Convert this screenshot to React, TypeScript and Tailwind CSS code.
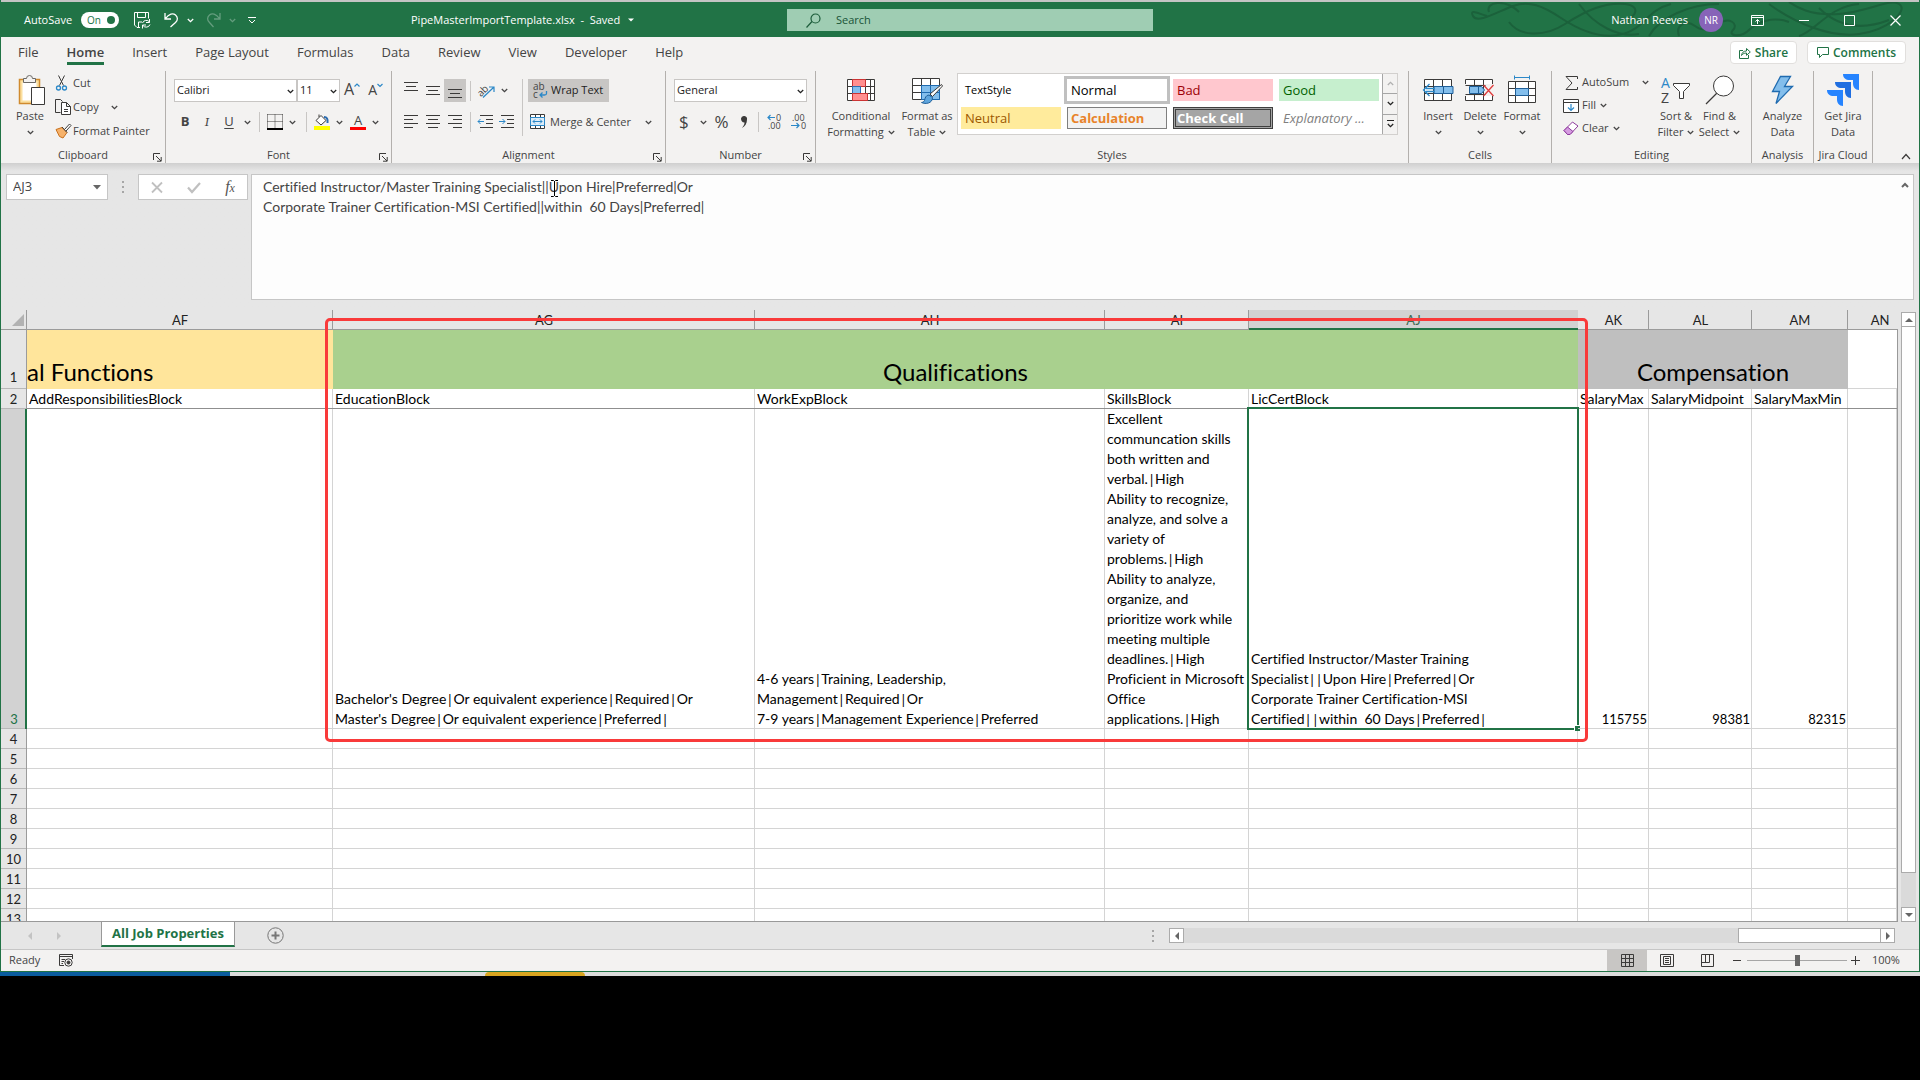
import type { ReactNode } from "react";

const TABS = ["File", "Home", "Insert", "Page Layout", "Formulas", "Data", "Review", "View", "Developer", "Help"];

const COLS = [
  { id: "AF", w: "w-[306px]", head: "AddResponsibilitiesBlock", lines: [] },
  {
    id: "AG", w: "w-[422px]", head: "EducationBlock",
    lines: ["Bachelor's Degree|Or equivalent experience|Required|Or", "Master's Degree|Or equivalent experience|Preferred|"],
  },
  {
    id: "AH", w: "w-[350px]", head: "WorkExpBlock",
    lines: ["4-6 years|Training, Leadership,", "Management|Required|Or", "7-9 years|Management Experience|Preferred"],
  },
  {
    id: "AI", w: "w-[144px]", head: "SkillsBlock",
    lines: [
      "Excellent", "communcation skills", "both written and", "verbal.|High", "Ability to recognize,", "analyze, and solve a",
      "variety of", "problems.|High", "Ability to analyze,", "organize, and", "prioritize work while", "meeting multiple",
      "deadlines.|High", "Proficient in Microsoft", "Office", "applications.|High",
    ],
  },
  {
    id: "AJ", w: "w-[329px]", head: "LicCertBlock",
    lines: [
      "Certified Instructor/Master Training", "Specialist||Upon Hire|Preferred|Or",
      "Corporate Trainer Certification-MSI", "Certified||within  60 Days|Preferred|",
    ],
  },
  { id: "AK", w: "w-[71px]", head: "SalaryMax", lines: ["115755"], num: true },
  { id: "AL", w: "w-[103px]", head: "SalaryMidpoint", lines: ["98381"], num: true },
  { id: "AM", w: "w-[96px]", head: "SalaryMaxMin", lines: ["82315"], num: true },
  { id: "AN", w: "", head: "", lines: [] },
];

const EMPTY_ROWS = [4, 5, 6, 7, 8, 9, 10, 11, 12, 13];

const FORMULA =
  "Certified Instructor/Master Training Specialist||Upon Hire|Preferred|Or\nCorporate Trainer Certification-MSI Certified||within  60 Days|Preferred|";

function Svg({ w, h, children, className = "" }: { w: number; h: number; children: ReactNode; className?: string }) {
  return (
    <svg width={w} height={h} viewBox={`0 0 ${w} ${h}`} fill="none" stroke="#3b3a39" className={`shrink-0 overflow-visible ${className}`} aria-hidden="true">
      {children}
    </svg>
  );
}

function Chev({ color = "#444", className = "" }: { color?: string; className?: string }) {
  return (
    <Svg w={7} h={5} className={className}>
      <path d="M.8 1l2.7 2.6L6.2 1" stroke={color} strokeWidth="1.3" />
    </Svg>
  );
}

function Group({ label, width, launcher, children }: { label: string; width: string; launcher?: boolean; children: ReactNode }) {
  return (
    <section className={`relative flex shrink-0 flex-col border-r border-[#b3b0ad] ${width}`} aria-label={label}>
      <div className="h-[76px]">{children}</div>
      <div className="text-center text-[11px] leading-4">{label}</div>
      {launcher && (
        <button className="absolute right-0 bottom-0 h-3 w-3" aria-label={`${label} settings`}>
          <Svg w={9} h={9}>
            <path d="M.5 7V.5H7M3 3l5 5M8.200 4v4.200H4" />
          </Svg>
        </button>
      )}
    </section>
  );
}

function Big({ icon, lines, width, chevron = "none" }: { icon: ReactNode; lines: string[]; width: string; chevron?: "none" | "inline" | "below" }) {
  return (
    <button className={`flex shrink-0 flex-col items-center ${width}`}>
      <span className="flex h-[37px] items-center justify-center">{icon}</span>
      {lines.map((l, i) => (
        <span key={l} className="flex items-center gap-1 whitespace-nowrap text-[11px] leading-4">
          {l}
          {chevron === "inline" && i === lines.length - 1 && <Chev />}
        </span>
      ))}
      {chevron === "below" && <Chev className="mt-1.5" />}
    </button>
  );
}

function Sep({ className = "h-5" }: { className?: string }) {
  return <span className={`w-px shrink-0 bg-[#c8c6c4] ${className}`} />;
}

function Combo({ label, value, width }: { label: string; value: string; width: string }) {
  return (
    <span className={`relative block h-[23px] ${width}`}>
      <select aria-label={label} className="block h-full w-full appearance-none border border-[#c8c6c4] bg-white pl-0.5 text-[11px] text-[#222] outline-none">
        <option>{value}</option>
      </select>
      <Chev className="pointer-events-none absolute top-[10px] right-[3px]" color="#222" />
    </span>
  );
}

// Four or so horizontal strokes; each entry is [x1, x2, y]
function Lines({ rows, w = 14, h = 14 }: { rows: number[][]; w?: number; h?: number }) {
  return (
    <Svg w={w} h={h}>
      {rows.map(([a, b, y]) => (
        <path key={y} d={`M${a} ${y}.5H${b}`} />
      ))}
    </Svg>
  );
}

function TitleBar() {
  return (
    <header className="relative flex h-[35px] shrink-0 items-center bg-[#217346] pt-px text-[11px] text-white">
      <svg className="absolute top-0 right-0" width="450" height="35" viewBox="0 0 450 35" fill="none" stroke="#1b613b" strokeWidth="2" aria-hidden="true">
        <path d="M18 14c-8-2-18-8-14 0s24-4 40-10 30 0 48 12 40 22 62 16 24-24 48-30" />
        <path d="M40 20c10 14 34 16 56 2s40-22 60-20 8 20-10 16M110 2c16 22 40 34 60 30M180 34c10-18 40-32 70-32M210 34c-4-12 8-16 16-10s14 4 20-6" />
        <path d="M250 22c10-8 20 0 14 6s8 8 16 0 24-14 40-8M300 2c24 18 60 34 90 30s50-24 40-30-30 8-60 10-44-8-50-12" />
        <path d="M330 34c16-4 30-30 60-32M20 10c-4-10 16-14 30 0M350 6c20 20 44 22 70 12" />
      </svg>
      <div className="flex min-w-0 flex-1 items-center">
        <div className="flex w-[410px] shrink-0 items-center pl-[23px]">
          <label className="flex items-center gap-[7px]">
            <span className="w-[50px] whitespace-nowrap">AutoSave</span>
            <span className="relative flex">
              <input type="checkbox" defaultChecked className="h-4 w-[38px] appearance-none rounded-full bg-white" />
              <span className="absolute left-1.5 text-[10px] leading-4 text-[#217346]">On</span>
              <span className="absolute top-1 right-1 h-2 w-2 rounded-full bg-[#217346]" />
            </span>
          </label>
          <button className="ml-[15px]" aria-label="Save">
            <Svg w={17} h={17}>
              <path stroke="#fff" d="M6 15.500H3L.5 13V.5h14v6M3.500.5v5h8v-5M4.500 15v-5H8M8.500 11a4 4 0 0 1 7-1M15.500 7v3.500H12M16 12.500a4 4 0 0 1-7 1M8.500 16.500V13H12" />
            </Svg>
          </button>
          <button className="ml-[13px] flex items-center gap-2" aria-label="Undo">
            <Svg w={15} h={16}>
              <path stroke="#fff" strokeWidth="1.300" d="M1 1v6h6M1.500 6.500C5 1.500 9 .8 11.500 3s2.500 5 0 7.500L6.500 15" />
            </Svg>
            <Chev color="#fff" />
          </button>
          <button className="ml-3 flex items-center gap-2 opacity-30" aria-label="Redo">
            <Svg w={15} h={16}>
              <path stroke="#fff" strokeWidth="1.300" d="M14 1v6H8M13.500 6.500C10 1.500 6 .8 3.500 3S1 8 3.500 10.500l4 4.500" />
            </Svg>
            <Chev color="#fff" />
          </button>
          <button className="ml-3" aria-label="Customize Quick Access Toolbar">
            <Svg w={8} h={7}>
              <path stroke="#fff" d="M0 .5h8M1 3l3 3 3-3" />
            </Svg>
          </button>
        </div>
        <button className="flex items-center gap-2 whitespace-nowrap">
          <span className="whitespace-pre">PipeMasterImportTemplate.xlsx  -  Saved</span>
          <Svg w={6} h={4}>
            <path d="M0 .5h6L3 3.500z" fill="#fff" stroke="none" />
          </Svg>
        </button>
      </div>
      <div className="ml-[38px] flex h-[22px] w-[366px] shrink-0 items-center bg-[#9fcdb3]">
        <Svg w={15} h={15} className="ml-[19px]">
          <path stroke="#1c5c3a" d="M.5 14.500l5.500-6" strokeWidth="1.200" />
          <circle cx="9.500" cy="5.500" r="4.500" stroke="#1c5c3a" strokeWidth="1.200" />
        </Svg>
        <input aria-label="Search" placeholder="Search" className="ml-[15px] flex-1 bg-transparent text-[11px] outline-none placeholder:text-[#185336]" />
      </div>
      <div className="relative flex min-w-0 flex-1 items-center justify-end pr-[18px]">
        <span className="mr-[11px] whitespace-nowrap">Nathan Reeves</span>
        <span className="mr-7 flex h-6 w-6 items-center justify-center rounded-full bg-[#8764b8] text-[10px]">NR</span>
        <div className="flex items-center gap-[35px]">
          <button aria-label="Ribbon display options">
            <Svg w={13} h={11}>
              <path stroke="#fff" d="M.5.5h12v10H.5zM.5 2.500h12M6.500 9V4.500M4.500 6.500l2-2 2 2" />
            </Svg>
          </button>
          <button aria-label="Minimize">
            <Svg w={10} h={11}>
              <path stroke="#fff" d="M0 5.500h10" />
            </Svg>
          </button>
          <button aria-label="Maximize">
            <Svg w={11} h={11}>
              <path stroke="#fff" d="M.5.5h10v10H.5z" />
            </Svg>
          </button>
          <button aria-label="Close">
            <Svg w={11} h={11}>
              <path stroke="#fff" d="M.5.5l10 10M10.500.5l-10 10" strokeWidth="1.200" />
            </Svg>
          </button>
        </div>
      </div>
    </header>
  );
}

function TabRow() {
  return (
    <nav className="flex h-[34px] items-start pr-[13px] pl-[17px] text-[13px]">
      <div className="flex gap-7">
        {TABS.map((t) => (
          <button key={t} className={t === "Home" ? "h-7 border-b-[3px] border-[#217346] pt-[3px] leading-[25px] font-semibold" : "h-7 leading-[31px]"}>
            {t}
          </button>
        ))}
      </div>
      <div className="mt-1 ml-auto flex gap-2.5 text-[12px] font-semibold text-[#217346]">
        <button className="flex h-[23px] w-[67px] items-center justify-center gap-1 rounded-sm border border-[#e1dfdd] bg-white">
          <Svg w={12} h={12}>
            <path stroke="#217346" d="M4 3.500H.5v8h9V8M2.500 8.500c.5-3 2-4.500 5-4.500V1.500L11.300 5 7.500 8.300V6C5 6 3.500 7 2.500 8.500z" />
          </Svg>
          Share
        </button>
        <button className="flex h-[23px] w-[99px] items-center justify-center gap-1 rounded-sm border border-[#e1dfdd] bg-white">
          <Svg w={12} h={11}>
            <path stroke="#217346" d="M.5.5h11v7H5.500l-3 3v-3h-2z" />
          </Svg>
          Comments
        </button>
      </div>
    </nav>
  );
}

function ClipboardGroup() {
  return (
    <Group label="Clipboard" width="w-[165px]" launcher>
      <div className="flex">
        <Big
          width="w-[54px] pl-1"
          lines={["Paste"]}
          chevron="below"
          icon={
            <Svg w={28} h={30} className="ml-1">
              <path d="M1.500 4.500h20v24h-20z" fill="#fbdf9f" stroke="#d08a2e" strokeWidth="1.500" />
              <path d="M4.500 7.500h14v18h-14z" fill="#fff" stroke="none" />
              <path d="M5.500 7.500v-4h3a3 3 0 0 1 6 0h3v4z" fill="#f3f2f1" stroke="#6b6966" />
              <path d="M13.500 12.500h13v17h-13z" fill="#fff" />
            </Svg>
          }
        />
        <div className="flex flex-col text-[11px]">
          <button className="flex h-6 items-center">
            <span className="flex w-[18px] shrink-0 justify-start pl-px">
              <Svg w={11} h={16}>
                <path d="M2.500.5l5 10M8.500.5l-5 10" />
                <circle cx="2.500" cy="13" r="2" stroke="#2b88c8" strokeWidth="1.300" />
                <circle cx="8.500" cy="13" r="2" stroke="#2b88c8" strokeWidth="1.300" />
              </Svg>
            </span>
            Cut
          </button>
          <button className="flex h-6 items-center">
            <span className="flex w-[18px] shrink-0">
              <Svg w={16} h={16}>
                <path d="M5.500 13.500h-5V.5h5l2 2" />
                <path d="M6.500 3.500h5l4 4v8h-9zM11.500 3.500v4h4M9 10.500h4M9 12.500h4" fill="#fff" />
              </Svg>
            </span>
            Copy
            <Chev className="ml-3" />
          </button>
          <button className="flex h-6 items-center whitespace-nowrap">
            <span className="flex w-[18px] shrink-0">
              <Svg w={16} h={16}>
                <path d="M1 6.500l6-2 5 5-4 5.500-3.500-1.500z" fill="#f6b26b" stroke="#c9711c" />
                <path d="M7 4l5 5.500M9.500 6.500l5-5.500L16 2.500 11 8" fill="#fff" />
              </Svg>
            </span>
            Format Painter
          </button>
        </div>
      </div>
    </Group>
  );
}

function FontGroup() {
  return (
    <Group label="Font" width="w-[226px]" launcher>
      <div className="pt-2 pl-2">
        <div className="flex h-[23px]">
          <Combo label="Font" value="Calibri" width="w-[123px]" />
          <Combo label="Font size" value="11" width="w-[43px]" />
          <button className="ml-1 flex items-start text-[16px] leading-[20px]" aria-label="Increase font size">
            A
            <Svg w={6} h={5} className="mt-1">
              <path d="M.5 3.500L3 1l2.500 2.500" stroke="#2b88c8" strokeWidth="1.200" />
            </Svg>
          </button>
          <button className="ml-2 flex items-start text-[14px] leading-[22px]" aria-label="Decrease font size">
            A
            <Svg w={6} h={5} className="mt-1">
              <path d="M.5 1L3 3.500 5.500 1" stroke="#2b88c8" strokeWidth="1.200" />
            </Svg>
          </button>
        </div>
        <div className="mt-2 flex h-6 items-center text-[13px]">
          <button className="w-[22px] font-bold">B</button>
          <button className="w-[22px] font-serif italic">I</button>
          <button className="w-[22px] underline underline-offset-2">U</button>
          <Chev className="ml-1" />
          <Sep className="ml-2 h-5" />
          <button className="ml-[7px]" aria-label="Borders">
            <Svg w={16} h={16}>
              <path d="M.5.5h15M.5.5v14M15.500.5v14M8 .5v14M.5 7.500h15" strokeDasharray="1 1" />
              <path d="M0 15h16" stroke="#000" strokeWidth="2" />
            </Svg>
          </button>
          <Chev className="ml-1.5" />
          <Sep className="ml-2.5 h-5" />
          <button className="ml-[7px]" aria-label="Fill color">
            <Svg w={16} h={16}>
              <path d="M7 1.500l5 5-5 4.500-5-4.500zM5 3V.5" fill="#fff" />
              <path d="M10 3c3 0 4 2 3.500 6" stroke="#2b6cb0" strokeWidth="2" />
              <path d="M0 14h16" stroke="#ff0" strokeWidth="4" />
            </Svg>
          </button>
          <Chev className="ml-1.5" />
          <button className="ml-[7px] flex w-4 flex-col items-center text-[13px] leading-[13px]" aria-label="Font color">
            A
            <span className="h-[3px] w-4 bg-[#f00]" />
          </button>
          <Chev className="ml-1.5" />
        </div>
      </div>
    </Group>
  );
}

function AlignmentGroup() {
  return (
    <Group label="Alignment" width="w-[274px]" launcher>
      <div className="flex pt-2 pl-2">
        <div className="flex w-[122px] flex-col gap-2">
          <div className="flex h-[23px] items-center">
            <button className="flex h-[23px] w-[22px] items-start justify-center pt-[3px]" aria-label="Top align">
              <Lines rows={[[0, 14, 0], [2, 12, 4], [0, 14, 8]]} />
            </button>
            <button className="flex h-[23px] w-[22px] items-center justify-center" aria-label="Middle align">
              <Lines rows={[[0, 14, 2], [2, 12, 6], [0, 14, 10]]} />
            </button>
            <button className="flex h-[23px] w-[22px] items-end justify-center bg-[#c8c6c4] pb-[3px]" aria-label="Bottom align">
              <Lines rows={[[0, 14, 4], [2, 12, 8], [0, 14, 12]]} />
            </button>
            <Sep className="ml-1 h-5" />
            <button className="ml-1.5 flex items-center gap-1.5" aria-label="Orientation">
              <Svg w={18} h={17}>
                <text x="0" y="12" fontSize="10" fill="#444" stroke="none" transform="rotate(-45 6 9)">ab</text>
                <path d="M6 15.500L16.500 5.500M12 5h5v5" stroke="#2b88c8" strokeWidth="1.200" />
              </Svg>
              <Chev />
            </button>
          </div>
          <div className="flex h-6 items-center">
            <button className="flex w-[22px] justify-center" aria-label="Align left">
              <Lines rows={[[0, 14, 0], [0, 9, 4], [0, 14, 8], [0, 9, 12]]} />
            </button>
            <button className="flex w-[22px] justify-center" aria-label="Center">
              <Lines rows={[[0, 14, 0], [2, 12, 4], [0, 14, 8], [2, 12, 12]]} />
            </button>
            <button className="flex w-[22px] justify-center" aria-label="Align right">
              <Lines rows={[[0, 14, 0], [5, 14, 4], [0, 14, 8], [5, 14, 12]]} />
            </button>
            <Sep className="ml-1 h-5" />
            <button className="ml-1.5" aria-label="Decrease indent">
              <Svg w={16} h={14}>
                <path d="M3 .5h13M9 4.500h7M9 8.500h7M3 12.500h13" />
                <path d="M1 6.500h6M3.500 4L1 6.500 3.500 9" stroke="#2b88c8" />
              </Svg>
            </button>
            <button className="ml-1.5" aria-label="Increase indent">
              <Svg w={16} h={14}>
                <path d="M2 .5h13M8 4.500h7M8 8.500h7M2 12.500h13" />
                <path d="M0 6.500h6M3.500 4L6 6.500 3.500 9" stroke="#2b88c8" />
              </Svg>
            </button>
          </div>
        </div>
        <Sep className="h-[57px]" />
        <div className="ml-[5px] flex flex-col gap-2 text-[11px]">
          <button className="flex h-[23px] w-[81px] items-center gap-[3px] bg-[#c8c6c4] pl-[5px] whitespace-nowrap text-[#222]">
            <Svg w={15} h={16}>
              <text x="0" y="7" fontSize="10" fill="#444" stroke="none">ab</text>
              <text x="0" y="15" fontSize="10" fill="#444" stroke="none">c</text>
              <path d="M13.500 8v2.500q0 1.500-2 1.500H7M9.500 9.500L7 12l2.500 2.500" stroke="#2b88c8" strokeWidth="1.300" />
            </Svg>
            Wrap Text
          </button>
          <button className="flex h-6 items-center gap-1 pl-0.5 whitespace-nowrap">
            <Svg w={16} h={16}>
              <path d="M.5.5h14v14H.5zM5.500.5v3M10.500.5v3M5.500 11.500v3M10.500 11.500v3" fill="#fff" />
              <path d="M.5 3.500h14v8H.5z" fill="#dcecf8" stroke="#2b88c8" />
              <path d="M3 7.500h9M5 5.500l-2 2 2 2M10 5.500l2 2-2 2" stroke="#2b88c8" />
            </Svg>
            Merge &amp; Center
            <Chev className="ml-2.5" />
          </button>
        </div>
      </div>
    </Group>
  );
}

function NumberGroup() {
  return (
    <Group label="Number" width="w-[150px]" launcher>
      <div className="px-2 pt-2">
        <Combo label="Number format" value="General" width="w-full" />
        <div className="mt-2 flex h-6 items-center text-[17px] leading-6">
          <button className="w-5 text-center">$</button>
          <Chev className="ml-1.5" />
          <button className="ml-0.5 w-[26px] text-center">%</button>
          <button className="w-5" aria-label="Comma style">
            <Svg w={10} h={14} className="mx-auto">
              <path d="M2 3.500a3 3 0 1 1 6 1c0 4-2 7-5 8.500 1.500-2 2.500-3.500 2.500-5.500C3 7.500 2 5.500 2 3.500z" fill="#3b3a39" stroke="none" />
            </Svg>
          </button>
          <Sep className="ml-1 h-5" />
          <button className="ml-2" aria-label="Increase decimal">
            <Svg w={16} h={16}>
              <text x="9" y="7" fontSize="9" fill="#444" stroke="none">0</text>
              <text x="1" y="15" fontSize="9" fill="#444" stroke="none">.00</text>
              <path d="M1 3.500h7M3.500 1L1 3.500 3.500 6" stroke="#2b88c8" strokeWidth="1.200" />
            </Svg>
          </button>
          <button className="ml-2" aria-label="Decrease decimal">
            <Svg w={16} h={16}>
              <text x="1" y="7" fontSize="9" fill="#444" stroke="none">.00</text>
              <text x="10" y="15" fontSize="9" fill="#444" stroke="none">0</text>
              <path d="M0 11.500h8M5.500 9L8 11.500 5.500 14" stroke="#2b88c8" strokeWidth="1.200" />
            </Svg>
          </button>
        </div>
      </div>
    </Group>
  );
}

const STYLES = [
  { name: "TextStyle", cls: "pl-1 text-[11px] text-black" },
  { name: "Normal", cls: "pl-1 text-[13px] text-black outline-[3px] outline-[#c0c0c0]" },
  { name: "Bad", cls: "bg-[#ffc7ce] pl-1 text-[13px] text-[#9c0006]" },
  { name: "Good", cls: "bg-[#c6efce] pl-1 text-[13px] text-[#006100]" },
  { name: "Neutral", cls: "bg-[#ffeb9c] pl-1 text-[13px] text-[#9c5700]" },
  { name: "Calculation", cls: "border border-[#7f7f7f] bg-[#f2f2f2] pl-[3px] text-[13px] font-bold text-[#e8832a]" },
  { name: "Check Cell", cls: "border-[3px] border-double border-[#3f3f3f] bg-[#a5a5a5] pl-px text-[13px] font-bold text-white" },
  { name: "Explanatory ...", cls: "pl-1 text-[13px] text-[#7f7f7f] italic" },
];

function StylesGroup() {
  return (
    <Group label="Styles" width="w-[593px]">
      <div className="flex">
        <Big
          width="ml-2 w-[74px]"
          lines={["Conditional", "Formatting"]}
          chevron="inline"
          icon={
            <Svg w={29} h={24}>
              <path d="M.5 1.500h27v21H.5zM.5 8.500h27M.5 15.500h27M5.500 1.500v21M18.500 1.500v21M23.500 1.500v21" fill="#fff" />
              <path d="M5.500 1.500h13v7h-13z" fill="#ff8f8f" stroke="#c33" />
              <path d="M5.500 8.500h8v7h-8z" fill="#83beec" stroke="#2b6cb0" />
              <path d="M5.500 15.500h15v7h-15z" fill="#ff8f8f" stroke="#c33" />
            </Svg>
          }
        />
        <Big
          width="w-[58px]"
          lines={["Format as", "Table"]}
          chevron="inline"
          icon={
            <Svg w={31} h={28}>
              <path d="M.5 2.500h27v21H.5zM.5 9.500h27M.5 16.500h27M9.500 2.500v21M18.500 2.500v21" fill="#fff" />
              <path d="M9.500 9.500h18v14h-18zM9.500 16.500h18M18.500 9.500v14" fill="#83beec" stroke="#1f6bb0" />
              <path d="M29.500 8.500L18 18l2.500 2.500L30.500 10z" fill="#fff" />
              <path d="M17 19c-3 0-4 3-4.500 5.500-1 2-3 2-3 2 4 2 11 1 11-5z" fill="#5ea5dd" stroke="#1f5f99" />
            </Svg>
          }
        />
        <div className="mt-0.5 ml-px flex h-[62px] border border-[#d2d0ce] bg-white">
          <div className="grid grid-cols-4 gap-x-1.5 gap-y-1.5 px-[3px] py-[5px]">
            {STYLES.map((s) => (
              <button key={s.name} className={`h-[22px] w-[100px] overflow-hidden text-left leading-4 whitespace-nowrap ${s.cls}`}>
                {s.name}
              </button>
            ))}
          </div>
          <div className="flex w-[15px] flex-col divide-y divide-[#a6a6a6] border-l border-[#a6a6a6] bg-[#f3f2f1]">
            <button className="flex flex-1 items-center justify-center" aria-label="Previous styles">
              <Chev color="#b0b0b0" className="rotate-180" />
            </button>
            <button className="flex flex-1 items-center justify-center" aria-label="Next styles">
              <Chev color="#222" />
            </button>
            <button className="flex flex-1 flex-col items-center justify-center gap-0.5" aria-label="More styles">
              <span className="h-px w-[7px] bg-[#222]" />
              <Chev color="#222" />
            </button>
          </div>
        </div>
      </div>
    </Group>
  );
}

function CellsGroup() {
  return (
    <Group label="Cells" width="w-[143px]">
      <div className="flex pl-2">
        <Big
          width="w-[42px]"
          lines={["Insert"]}
          chevron="below"
          icon={
            <Svg w={32} h={26}>
              <path d="M2.500 2.500h27v21h-27zM11.500 2.500v21M20.500 2.500v21M2.500 9.500h27M2.500 16.500h27" fill="#fff" />
              <path d="M12 9.500h19v7H12zM21.500 9.500v7" fill="#83beec" stroke="#1f5f99" />
              <path d="M13 11.500H4M13 14.500H4M7.500 7L1.500 13l6 6" stroke="#2b88c8" strokeWidth="1.300" />
            </Svg>
          }
        />
        <Big
          width="w-[42px]"
          lines={["Delete"]}
          chevron="below"
          icon={
            <Svg w={30} h={26}>
              <path d="M.5 7V2.500h27V7M.5 19v4.500h27V19M9.500 2.500v21M18.500 2.500v21M.5 8.500h20M.5 17.500h20" fill="#fff" />
              <path d="M4.500 9.500h12l3 3.500-3 3.500h-12zM13.500 9.500v7" fill="#83beec" stroke="#1f5f99" />
              <path d="M18.500 8l10 11M28.500 8l-10 11" stroke="#e03e3e" strokeWidth="1.300" />
            </Svg>
          }
        />
        <Big
          width="w-[42px]"
          lines={["Format"]}
          chevron="below"
          icon={
            <Svg w={28} h={30}>
              <path d="M.5 6.500h27v21H.5zM7.500 6.500v21M20.500 6.500v21M.5 13.500h27M.5 20.500h27" fill="#fff" />
              <path d="M7.500 13.500h13v7h-13z" fill="#83beec" stroke="#1f5f99" />
              <path d="M6.500 2.500h15M6.500.5v4M21.500.5v4" stroke="#2b88c8" />
            </Svg>
          }
        />
      </div>
    </Group>
  );
}

function EditingGroup() {
  return (
    <Group label="Editing" width="w-[200px]">
      <div className="flex pl-[11px]">
        <div className="flex w-[91px] flex-col pr-[5px] text-[11px]">
          <button className="flex h-[23px] items-center">
            <span className="w-[19px] shrink-0 pl-0.5">
              <Svg w={14} h={14}>
                <path d="M12.500 3V.5H1L7 7l-6 6.500h11.500V11" />
              </Svg>
            </span>
            AutoSum
            <Chev className="ml-auto" />
          </button>
          <button className="flex h-[23px] items-center">
            <span className="w-[19px] shrink-0">
              <Svg w={16} h={14}>
                <path d="M.5.5h15v13H.5zM.5 3.500h15" fill="#fff" />
                <path d="M8 5v6.500M5 8.500l3 3 3-3" stroke="#2b88c8" strokeWidth="1.200" />
              </Svg>
            </span>
            Fill
            <Chev className="ml-1" />
          </button>
          <button className="flex h-[23px] items-center">
            <span className="w-[19px] shrink-0">
              <Svg w={16} h={15}>
                <path d="M1 9.500L9.500 1l5.500 4L7 13.500H4.500z" fill="#fff" stroke="#8e3a9d" />
                <path d="M1 9.500L4.500 6 10 10.500l-3 3H4.500z" fill="#d59be0" stroke="#8e3a9d" />
              </Svg>
            </span>
            Clear
            <Chev className="ml-1" />
          </button>
        </div>
        <Big
          width="w-[44px]"
          lines={["Sort &", "Filter"]}
          chevron="inline"
          icon={
            <Svg w={30} h={30}>
              <text x="0" y="13" fontSize="14" fill="#2b88c8" stroke="none">A</text>
              <text x="0" y="28" fontSize="14" fill="#444" stroke="none">Z</text>
              <path d="M12.500 8.500h16v2l-6 6v7h-4v-7l-6-6z" fill="#fff" />
            </Svg>
          }
        />
        <Big
          width="w-[43px]"
          lines={["Find &", "Select"]}
          chevron="inline"
          icon={
            <Svg w={30} h={30}>
              <path d="M1 29l11-11" strokeWidth="1.300" />
              <circle cx="18.500" cy="11" r="10" fill="#fff" />
            </Svg>
          }
        />
      </div>
    </Group>
  );
}

function Ribbon() {
  return (
    <div className="flex h-[92px] text-[#444]">
      <ClipboardGroup />
      <FontGroup />
      <AlignmentGroup />
      <NumberGroup />
      <StylesGroup />
      <CellsGroup />
      <EditingGroup />
      <Group label="Analysis" width="w-[62px]">
        <Big
          width="w-full"
          lines={["Analyze", "Data"]}
          icon={
            <Svg w={24} h={30}>
              <path d="M9.500 1.500h10l-6 10h8L5 28.500l3.500-12h-7z" fill="#83beec" stroke="#1f6bb0" strokeWidth="1.300" />
            </Svg>
          }
        />
      </Group>
      <Group label="Jira Cloud" width="w-[59px]">
        <Big
          width="w-full"
          lines={["Get Jira", "Data"]}
          icon={
            <Svg w={32} h={32}>
              <g stroke="none" fill="#2684ff">
                <path d="M16 0h16v16c-4 0-6-3-6-6.500V6h-3.500C19 6 16 4 16 0z" />
                <path d="M8 8h16v16c-4 0-6-3-6-6.500V14h-3.500C11 14 8 12 8 8z" fill="#1f6ee0" />
                <path d="M0 16h16v16c-4 0-6-3-6-6.500V22H6.500C3 22 0 20 0 16z" />
              </g>
            </Svg>
          }
        />
      </Group>
      <div className="flex flex-1 items-end justify-end pr-2">
        <button className="mb-[3px]" aria-label="Collapse the ribbon">
          <Svg w={10} h={7}>
            <path d="M1 6l4-4.500L9 6" strokeWidth="1.200" />
          </Svg>
        </button>
      </div>
    </div>
  );
}

function FormulaBar() {
  return (
    <div className="flex h-[147px] shrink-0 items-start bg-linear-to-b from-[#cfcfcf] to-[#e6e6e6] to-[8px] pt-[11px] pr-[5px] pl-[5px] text-[#444]">
      <div className="flex h-[26px] w-[102px] items-center border border-[#c6c6c6] bg-white pr-1.5">
        <input aria-label="Name box" defaultValue="AJ3" className="w-0 flex-1 bg-transparent pl-1.5 text-[13px] outline-none" />
        <Svg w={8} h={5}>
          <path d="M0 0h8L4 4.500z" fill="#666" stroke="none" />
        </Svg>
      </div>
      <span className="mx-3.5 flex h-[26px] w-0.5 flex-col items-center justify-center gap-[3px]">
        <span className="h-0.5 w-0.5 bg-[#a6a6a6]" />
        <span className="h-0.5 w-0.5 bg-[#a6a6a6]" />
        <span className="h-0.5 w-0.5 bg-[#a6a6a6]" />
      </span>
      <div className="flex h-[26px] w-[110px] items-center justify-around border border-[#c6c6c6] bg-white">
        <button aria-label="Cancel">
          <Svg w={12} h={11}>
            <path d="M1 .5l10 10M11 .5l-10 10" stroke="#c0c0c0" strokeWidth="1.800" />
          </Svg>
        </button>
        <button aria-label="Enter">
          <Svg w={14} h={11}>
            <path d="M1 5.500L5 10l8-9" stroke="#c0c0c0" strokeWidth="2.200" />
          </Svg>
        </button>
        <button className="font-['Liberation_Serif',serif] text-[16px] leading-5 text-[#555] italic" aria-label="Insert function">
          f<span className="text-[12px]">x</span>
        </button>
      </div>
      <div className="relative ml-[3px] flex h-[126px] min-w-0 flex-1 border border-[#c6c6c6] bg-[#fdfdfd]">
        <textarea
          aria-label="Formula bar"
          defaultValue={FORMULA}
          spellCheck={false}
          className="flex-1 resize-none bg-transparent pt-0.5 pl-[11px] font-[Lato,'Noto_Sans',sans-serif] text-[14px] leading-5 whitespace-pre outline-none [font-variant-ligatures:none]"
        />
        <button className="mt-1.5 mr-1 self-start" aria-label="Collapse formula bar">
          <Svg w={8} h={8}>
            <path d="M1 6l3-3 3 3" stroke="#666" strokeWidth="2" />
          </Svg>
        </button>
        {/* text cursor */}
        <Svg w={7} h={17} className="absolute top-[5px] left-[299px]">
          <path d="M0 .5h2.500l1 1 1-1H7M3.500 1v15M0 16.500h2.500l1-1 1 1H7" stroke="#000" />
        </Svg>
      </div>
    </div>
  );
}

const GRID = "shadow-[inset_-1px_-1px_0_#d4d4d4]";
const ROW_HEAD = "border-r border-[#9b9b9b] bg-[#e6e6e6] p-0 text-center align-bottom text-[13px] font-normal shadow-[inset_0_-1px_0_#b8b8b8]";

// The import format separates its fields with bars, set in the wider Noto bar
function CellLine({ text }: { text: string }) {
  return (
    <div className="h-5">
      {text.split(/(\|)/).map((part, i) =>
        part === "|" ? (
          <span key={i} className="font-['Noto_Sans',sans-serif] text-[13px] leading-none">|</span>
        ) : (
          part
        )
      )}
    </div>
  );
}

function Sheet() {
  return (
    <div className="relative min-w-0 flex-1 overflow-hidden border-b border-[#999] bg-white">
      <table className="w-full table-fixed border-separate border-spacing-0 font-[Lato,'Noto_Sans',sans-serif] text-[14px] leading-5 text-black [font-variant-ligatures:none]">
        <colgroup>
          <col className="w-[26px]" />
          {COLS.map((c) => (
            <col key={c.id} className={c.w} />
          ))}
        </colgroup>
        <thead>
          <tr>
            <td className="h-5 bg-[#e6e6e6] p-0 shadow-[inset_-1px_-1px_0_#9b9b9b]">
              <Svg w={12} h={12} className="mr-[3px] ml-auto">
                <path d="M12 0v12H0z" fill="#b2b2b2" stroke="none" />
              </Svg>
            </td>
            {COLS.map((c) => (
              <th
                key={c.id}
                scope="col"
                className={
                  c.id === "AJ"
                    ? "h-5 bg-[#d2d2d2] p-0 text-[13px] font-normal text-[#3f6b54] shadow-[inset_0_-2px_0_#217346]"
                    : "h-5 bg-[#e6e6e6] p-0 text-[13px] font-normal text-[#222] shadow-[inset_-1px_-1px_0_#9b9b9b] last:pl-3.5 last:shadow-[inset_0_-1px_0_#9b9b9b]"
                }
              >
                {c.id}
              </th>
            ))}
          </tr>
        </thead>
        <tbody>
          <tr className="text-[24px] leading-[34px]">
            <th scope="row" className={`h-[59px] leading-6 text-[#222] ${ROW_HEAD}`}>1</th>
            <td className="overflow-hidden bg-[#ffe59b] p-0 align-bottom whitespace-nowrap">al Functions</td>
            <td colSpan={4} className="bg-[#a9d08e] p-0 text-center align-bottom">Qualifications</td>
            <td colSpan={3} className="bg-[#bfbfbf] p-0 text-center align-bottom">Compensation</td>
            <td className="border-r border-[#999] p-0 shadow-[inset_0_-1px_0_#d4d4d4]" />
          </tr>
          <tr>
            <th scope="row" className={`h-5 text-[#222] ${ROW_HEAD}`}>2</th>
            {COLS.map((c) => (
              <td key={c.id} className="h-5 p-0 pl-0.5 whitespace-nowrap shadow-[inset_0_-1px_0_#8f8f8f,inset_-1px_0_0_#d4d4d4] last:border-r last:border-[#999]">
                {c.head}
              </td>
            ))}
          </tr>
          <tr>
            <th scope="row" className="h-[320px] bg-[#d2d2d2] p-0 align-bottom text-[13px] font-normal text-[#217346] shadow-[inset_-2px_0_0_#217346,inset_0_-1px_0_#b8b8b8]">3</th>
            {COLS.map((c) => (
              <td
                key={c.id}
                className={`relative p-0 px-0.5 align-bottom whitespace-pre last:border-r last:border-[#999] ${GRID} ${c.num ? "text-right text-[13px]" : ""}`}
              >
                {c.lines.map((l) => (
                  <CellLine key={l} text={l} />
                ))}
                {c.id === "AJ" && (
                  <div className="absolute -top-0.5 -right-px -bottom-px -left-0.5 border-2 border-[#217346]">
                    <span className="absolute -right-[3px] -bottom-[3px] h-1.5 w-1.5 border-t border-l border-white bg-[#217346]" />
                  </div>
                )}
              </td>
            ))}
          </tr>
          {EMPTY_ROWS.map((n) => (
            <tr key={n}>
              <th scope="row" className={`h-5 text-[#222] ${ROW_HEAD}`}>{n}</th>
              {COLS.map((c) => (
                <td key={c.id} className={`h-5 p-0 last:border-r last:border-[#999] ${GRID}`} />
              ))}
            </tr>
          ))}
        </tbody>
      </table>
      {/* callout round the Qualifications columns */}
      <div className="pointer-events-none absolute top-2 left-[324px] h-[424px] w-[1263px] rounded-[5px] border-[3px] border-[#f93a3a]" />
    </div>
  );
}

function ScrollButton({ label, d }: { label: string; d: string }) {
  return (
    <button aria-label={label} className="flex h-[15px] w-[15px] shrink-0 items-center justify-center border border-[#ababab] bg-white">
      <Svg w={8} h={8}>
        <path d={d} fill="#666" stroke="none" />
      </Svg>
    </button>
  );
}

function SheetTabs() {
  return (
    <div className="flex h-[27px] shrink-0 items-center bg-[#e6e6e6]">
      <div className="flex w-[100px] items-center gap-[25px] pl-[27px]">
        <Svg w={4} h={8}>
          <path d="M4 0v8L0 4z" fill="#c3c3c3" stroke="none" />
        </Svg>
        <Svg w={4} h={8}>
          <path d="M0 0v8l4-4z" fill="#c3c3c3" stroke="none" />
        </Svg>
      </div>
      <button className="-mt-px h-[26px] w-[134px] self-start border-x border-b-2 border-x-[#999] border-b-[#217346] bg-white text-[13px] leading-[25px] font-bold whitespace-nowrap text-[#217346]">
        All Job Properties
      </button>
      <button className="ml-8" aria-label="New sheet">
        <Svg w={17} h={17}>
          <circle cx="8.500" cy="8.500" r="7.700" stroke="#767676" />
          <path d="M8.500 4.500v8M4.500 8.500h8" stroke="#767676" strokeWidth="2" />
        </Svg>
      </button>
      <span className="mr-[15px] ml-auto flex w-0.5 flex-col gap-[3px]">
        <span className="h-0.5 w-0.5 bg-[#a6a6a6]" />
        <span className="h-0.5 w-0.5 bg-[#a6a6a6]" />
        <span className="h-0.5 w-0.5 bg-[#a6a6a6]" />
      </span>
      <div className="mr-6 flex h-[15px] w-[726px] bg-[#dadada]">
        <ScrollButton label="Scroll left" d="M6 0v8L2 4z" />
        <span className="ml-auto w-[142px] border-y border-l border-[#ababab] bg-white" />
        <ScrollButton label="Scroll right" d="M2 0v8l4-4z" />
      </div>
    </div>
  );
}

function StatusBar() {
  return (
    <footer className="flex h-[22px] shrink-0 items-center border-t border-[#c6c6c6] bg-[#f3f2f1] text-[11px] text-[#444]">
      <span className="w-[50px] pl-2">Ready</span>
      <button className="ml-2" aria-label="Record macro">
        <Svg w={15} h={13}>
          <path d="M5 11.500H.5V.5h13V5M.5 2.500h13M2.500 5.500H6M2.500 7.500H5M2.500 9.500H4" />
          <circle cx="9.500" cy="8.500" r="3.700" />
          <circle cx="9.500" cy="8.500" r="1.500" fill="#3b3a39" />
        </Svg>
      </button>
      <div className="ml-auto flex h-full items-center">
        <button className="flex h-full w-10 items-center justify-center bg-[#c8c6c4]" aria-label="Normal view">
          <Svg w={13} h={13}>
            <path d="M.5.5h12v12H.5zM4.500.5v12M8.500.5v12M.5 4.500h12M.5 8.500h12" />
          </Svg>
        </button>
        <button className="flex h-full w-10 items-center justify-center" aria-label="Page layout view">
          <Svg w={14} h={13}>
            <path d="M.5.5h13v12H.5zM3.500 2.500h7v8h-7zM5 4.500h4M5 6.500h4M5 8.500h4" />
          </Svg>
        </button>
        <button className="flex h-full w-10 items-center justify-center" aria-label="Page break preview">
          <Svg w={13} h={13}>
            <path d="M.5.5h12v12H.5zM.5 8.500h8v-8M4.500.5v8" />
          </Svg>
        </button>
        <button className="ml-1.5 w-2.5" aria-label="Zoom out">
          <Svg w={8} h={9}>
            <path d="M0 4.500h8" />
          </Svg>
        </button>
        <input
          type="range"
          aria-label="Zoom"
          min={10}
          max={190}
          defaultValue={100}
          className="mx-1 h-px w-[100px] appearance-none bg-[#a6a6a6] [&::-webkit-slider-thumb]:h-[11px] [&::-webkit-slider-thumb]:w-[5px] [&::-webkit-slider-thumb]:appearance-none [&::-webkit-slider-thumb]:bg-[#666]"
        />
        <button aria-label="Zoom in">
          <Svg w={9} h={9}>
            <path d="M0 4.500h9M4.500 0v9" />
          </Svg>
        </button>
        <span className="w-[59px] pl-3 text-[11px]">100%</span>
      </div>
    </footer>
  );
}

export default function App() {
  return (
    <div className="flex h-screen flex-col overflow-hidden bg-black font-['Open_Sans','Noto_Sans',sans-serif]">
      <div className="flex min-h-0 flex-1 flex-col border-x border-b border-[#217346] bg-[#e6e6e6]">
        <div className="h-0.5 shrink-0 bg-[#c4c4c4]" />
        <TitleBar />
        <div className="shrink-0 bg-[#f3f2f1] text-[#444]">
          <TabRow />
          <Ribbon />
        </div>
        <FormulaBar />
        <div className="flex min-h-0 flex-1">
          <Sheet />
          <div className="flex w-[21px] shrink-0 flex-col pt-0.5 pl-[3px]">
            <ScrollButton label="Scroll up" d="M0 6h8L4 2z" />
            <div className="flex w-[15px] flex-1 flex-col bg-[#dadada] pb-[34px]">
              <span className="flex-1 border-x border-b border-[#ababab] bg-white" />
            </div>
            <ScrollButton label="Scroll down" d="M0 2h8L4 6z" />
          </div>
        </div>
        <SheetTabs />
        <StatusBar />
      </div>
      {/* sliver of the desktop below the window */}
      <div className="flex h-1 shrink-0 bg-[#dcdcdc]">
        <span className="w-[230px] bg-[#0a5c9e]" />
        <span className="ml-[255px] w-[100px] rounded-t-full bg-[#d9a520]" />
      </div>
      <div className="h-[104px] shrink-0" />
    </div>
  );
}
